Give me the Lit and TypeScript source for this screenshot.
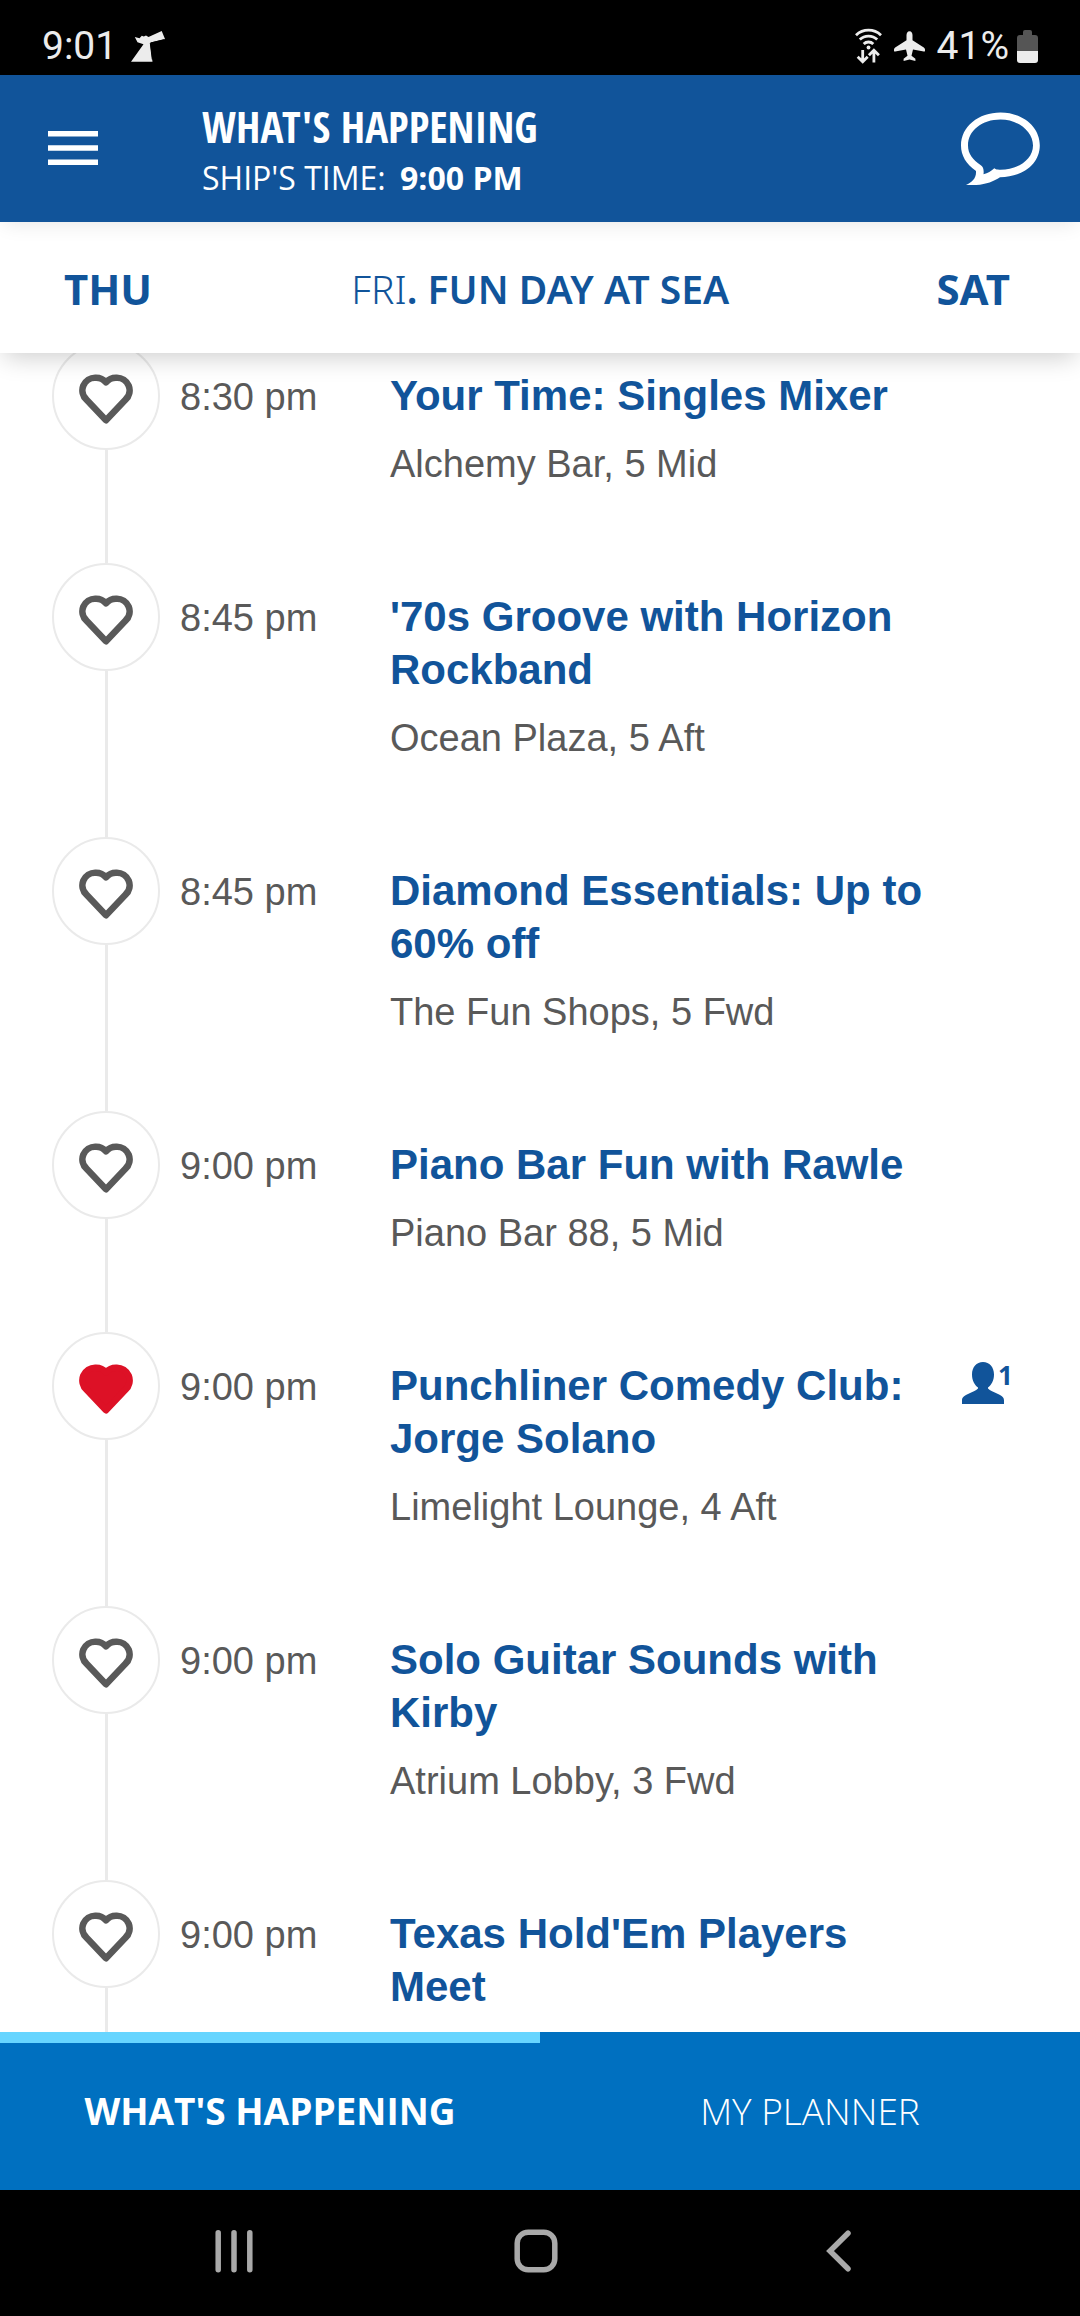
import { LitElement, html, svg, css, nothing } from "lit";
import { customElement, property, query, state } from "lit/decorators.js";
import { classMap } from "lit/directives/class-map.js";

interface CruiseEvent {
  time: string;
  title: string;
  place?: string;
  liked?: boolean;
  friends?: number;
}

const EVENTS: CruiseEvent[] = [
  { time: "8:30 pm", title: "Your Time: Singles Mixer", place: "Alchemy Bar, 5 Mid" },
  { time: "8:45 pm", title: "'70s Groove with Horizon Rockband", place: "Ocean Plaza, 5 Aft" },
  { time: "8:45 pm", title: "Diamond Essentials: Up to 60% off", place: "The Fun Shops, 5 Fwd" },
  { time: "9:00 pm", title: "Piano Bar Fun with Rawle", place: "Piano Bar 88, 5 Mid" },
  {
    time: "9:00 pm",
    title: "Punchliner Comedy Club: Jorge Solano",
    place: "Limelight Lounge, 4 Aft",
    liked: true,
    friends: 1,
  },
  { time: "9:00 pm", title: "Solo Guitar Sounds with Kirby", place: "Atrium Lobby, 3 Fwd" },
  { time: "9:00 pm", title: "Texas Hold'Em Players Meet" },
];

@customElement("status-bar")
class StatusBar extends LitElement {
  static styles = css`
    :host {
      display: flex;
      flex: none;
      align-items: center;
      justify-content: space-between;
      box-sizing: border-box;
      height: 75px;
      padding: 17px 42px 0;
      background: #000;
      color: #ececec;
      font: 400 39px/44px Roboto, "Liberation Sans", sans-serif;
    }
    .group {
      display: flex;
      align-items: center;
    }
    .left {
      gap: 14px;
    }
    .right {
      gap: 12px;
    }
    .battery {
      display: flex;
      align-items: center;
      gap: 8px;
    }
    svg {
      display: block;
      fill: currentColor;
    }
  `;

  render() {
    return html`
      <div class="group left">
        <span>9:01</span>
        <svg width="34" height="31" viewBox="0 0 34 31" aria-hidden="true">
          <path d="M3.800 6 8.500 7.300 10.800 4.800 12.800 5.600 15 4.500 17.500 6 30.700 0 34 8 20 11.500 19.300 14 21.500 30.700H0L12.500 13.300 6.500 11.300Z" />
          <path fill="none" stroke="#000" stroke-width="1" d="M33 8.800 19.300 12 21.300 28.500" />
        </svg>
      </div>
      <div class="group right">
        <svg width="27" height="36" viewBox="0 0 27 36" aria-hidden="true">
          <g fill="none" stroke="currentColor" stroke-width="2.8">
            <path d="M1 7.200a18 18 0 0 1 25 0" />
            <path d="M4.800 11.600a12.400 12.400 0 0 1 17.400 0" />
            <path d="M8.700 16a6.800 6.800 0 0 1 9.600 0" />
            <path d="M7.700 22v12M2.700 28.800l5 5 5-5" />
            <path d="M18.900 34.500v-12M13.900 27.300l5-5 5 5" />
          </g>
          <circle cx="13.500" cy="19.500" r="1.900" />
        </svg>
        <svg width="31" height="31" viewBox="0 0 31 31" aria-hidden="true">
          <path d="M15.500.3c-2 0-3 1.700-3 4v4.900L1.200 16.400Q0 17.200 0 18.400v1.500q.2.800 1.200.6l10.800-2 1.500 6.200-3.900 3v2.200l5.900-1.500 5.900 1.500v-2.200l-3.900-3 1.500-6.200 10.800 2q1 .2 1.200-.6v-1.500q0-1.200-1.200-2L18.500 9.200V4.300c0-2.300-1-4-3-4Z" />
        </svg>
        <div class="battery">
          <span>41%</span>
          <svg width="21" height="33" viewBox="0 0 21 33" aria-hidden="true">
            <path fill="#555" d="M6 2q0-2 2-2h5q2 0 2 2v3h3q3 0 3 3v13H0V8q0-3 3-3h3Z" />
            <path d="M0 21h21v9q0 3-3 3H3q-3 0-3-3Z" />
          </svg>
        </div>
      </div>
    `;
  }
}

@customElement("app-header")
class AppHeader extends LitElement {
  static styles = css`
    :host {
      display: flex;
      flex: none;
      position: relative;
      z-index: 2;
      align-items: center;
      box-sizing: border-box;
      height: 147px;
      padding: 0 40px 0 48px;
      background: #11549a;
      color: #fff;
      box-shadow: 0 4px 20px -4px rgba(0, 0, 0, 0.12);
    }
    button {
      display: block;
      flex: none;
      padding: 0;
      border: 0;
      background: none;
      color: inherit;
    }
    svg {
      display: block;
    }
    .titles {
      flex: 1;
      padding: 8px 104px 0;
    }
    h1 {
      margin: 0;
      font: 700 43px/50px "Open Sans Condensed", "Roboto Condensed", "Liberation Sans Narrow", "Liberation Sans", sans-serif;
    }
    p {
      margin: 0;
      font: 400 32px/52px "Open Sans", sans-serif;
    }
    strong {
      margin-left: 6px;
      font-weight: 700;
    }
  `;

  render() {
    return html`
      <button aria-label="Menu">
        <svg width="50" height="35" viewBox="0 0 50 35">
          <path fill="#fff" d="M0 0h50v5.500H0zM0 14.200h50v5.500H0zM0 28.400h50v5.500H0z" />
        </svg>
      </button>
      <div class="titles">
        <h1>WHAT'S HAPPENING</h1>
        <p>SHIP'S TIME: <strong>9:00 PM</strong></p>
      </div>
      <button aria-label="Chat">
        <svg width="80" height="73" viewBox="0 0 80 73">
          <path
            fill="#fff"
            fill-rule="evenodd"
            d="M40.500.5C62 .5 79.800 14.500 79.800 33.500S62 65 40 65.200C32 70.500 22 74 6 73 12 70.500 16.500 66.500 16 59 6 52 1 43.500 1 33.500 1 14.500 18.500.5 40.500.5ZM40.500 7.500C22 7.500 8 18.500 8 33.500c0 8.500 5 14.500 12.500 19.500 3 2 3.500 5 3 9.300 4.500-1 7.500-3 10.800-6 2 1.600 4 1.400 6.200 1.400C58 57.700 73 47.500 73 33.500S58.500 7.500 40.500 7.500Z"
          />
        </svg>
      </button>
    `;
  }
}

@customElement("day-switcher")
class DaySwitcher extends LitElement {
  static styles = css`
    :host {
      display: flex;
      flex: none;
      position: relative;
      z-index: 1;
      align-items: center;
      justify-content: space-between;
      box-sizing: border-box;
      height: 131px;
      padding: 2px 70px 0 64px;
      background: #fff;
      color: #11549a;
      box-shadow: 0 8px 24px -4px rgba(0, 0, 0, 0.2);
      font: 700 42px/52px "Noto Sans", "Open Sans", sans-serif;
    }
    button {
      padding: 0;
      border: 0;
      background: none;
      color: inherit;
      font: inherit;
    }
    h2 {
      margin: 0 8px 0 0;
      font-weight: 600;
      font-size: 39px;
    }
    .weekday {
      font-weight: 300;
    }
  `;

  render() {
    return html`
      <button>THU</button>
      <h2><span class="weekday">FRI</span>. FUN DAY AT SEA</h2>
      <button>SAT</button>
    `;
  }
}

@customElement("event-row")
class EventRow extends LitElement {
  @property({ attribute: false }) event!: CruiseEvent;
  @state() private liked?: boolean;

  static styles = css`
    :host {
      display: grid;
      grid-template-columns: 108px 210px minmax(0, 1fr) 118px;
      padding: 0 0 0 52px;
      align-items: baseline;
      font-family: "Liberation Sans", Arial, sans-serif;
    }
    .rail {
      display: flex;
      flex-direction: column;
      align-items: center;
      align-self: stretch;
    }
    .like {
      display: flex;
      flex: none;
      align-items: center;
      justify-content: center;
      box-sizing: border-box;
      width: 108px;
      height: 108px;
      padding: 5px 0 0;
      border: 2px solid #eaeaea;
      border-radius: 50%;
      background: #fff;
      color: #595959;
    }
    .like.on {
      color: #dd1126;
    }
    .heart {
      fill: none;
      stroke: currentColor;
      stroke-width: 6.6;
      stroke-linejoin: round;
    }
    .on .heart {
      fill: currentColor;
    }
    .line {
      flex: 1;
      width: 3px;
      background: #eaeaea;
    }
    time {
      padding-left: 20px;
      color: #595959;
      font-size: 38px;
      line-height: 53px;
    }
    .body {
      padding: 27px 20px 74px;
    }
    h3 {
      margin: 0;
      color: #11549a;
      font-size: 42px;
      line-height: 53px;
    }
    p {
      margin: 17px 0 0;
      color: #595959;
      font-size: 38px;
      line-height: 50px;
    }
    .friends {
      display: flex;
      align-self: start;
      padding-top: 30px;
      color: #11549a;
      font: 700 26px/26px "Noto Sans", sans-serif;
    }
    .friends svg {
      flex: none;
      fill: currentColor;
    }
    .friends svg + span {
      margin-left: -6px;
    }
  `;

  render() {
    const { time, title, place, friends } = this.event;
    const on = this.liked ?? !!this.event.liked;
    return html`
      <div class="rail">
        <button
          class=${classMap({ like: true, on })}
          aria-label="Favorite"
          aria-pressed=${on ? "true" : "false"}
          @click=${() => (this.liked = !on)}
        >
          <svg width="54" height="50" viewBox="0 0 54 50">
            <path
              class="heart"
              d="M27 46.200 7.600 25.800A12.700 12.700 0 0 1 16.700 3.700 13.300 13.300 0 0 1 27 8.200 13.300 13.300 0 0 1 37.300 3.700 12.700 12.700 0 0 1 46.400 25.800Z"
            />
          </svg>
        </button>
        <div class="line"></div>
      </div>
      <time>${time}</time>
      <div class="body">
        <h3>${title}</h3>
        ${place ? html`<p>${place}</p>` : nothing}
      </div>
      ${friends
        ? html`<div class="friends">
            <svg width="42" height="42" viewBox="0 0 42 42" aria-hidden="true">
              <path d="M21 0c6.500 0 11 5 11 12.500 0 6-2.500 10.500-6 13v1c2 2.500 5.500 3.300 10 5.500 4.500 2.200 6 3.500 6 6.500V42H0v-3.500c0-3 1.500-4.300 6-6.500 4.500-2.200 8-3 10-5.500v-1c-3.500-2.500-6-7-6-13C10 5 14.500 0 21 0Z" />
            </svg>
            <span>${friends}</span>
          </div>`
        : nothing}
    `;
  }
}

@customElement("bottom-tabs")
class BottomTabs extends LitElement {
  @state() private active = 0;

  static styles = css`
    :host {
      display: grid;
      flex: none;
      grid-template-columns: 1fr 1fr;
      height: 158px;
      background: #0070c0;
    }
    button {
      padding: 0 0 11px;
      border: 0;
      border-top: 11px solid transparent;
      background: none;
      color: #fff;
      font: 300 37px/50px "Open Sans", sans-serif;
    }
    .active {
      border-top-color: #67d5ff;
      font-weight: 700;
    }
  `;

  render() {
    return ["WHAT'S HAPPENING", "MY PLANNER"].map(
      (label, i) => html`<button
        class=${classMap({ active: this.active === i })}
        @click=${() => (this.active = i)}
      >${label}</button>`
    );
  }
}

@customElement("system-nav")
class SystemNav extends LitElement {
  static styles = css`
    :host {
      display: grid;
      flex: none;
      grid-template-columns: repeat(3, 1fr);
      box-sizing: border-box;
      height: 126px;
      padding: 0 90px 4px 83px;
      background: #000;
    }
    button {
      display: flex;
      align-items: center;
      justify-content: center;
      padding: 0;
      border: 0;
      background: none;
    }
    svg {
      fill: none;
      stroke: #a9a9a9;
      stroke-width: 5.5;
      stroke-linecap: round;
    }
  `;

  private key(label: string, shape: unknown) {
    return html`<button aria-label=${label}>
      <svg width="44" height="44" viewBox="0 0 44 44">${shape}</svg>
    </button>`;
  }

  render() {
    return html`
      ${this.key("Recents", svg`<path d="M6.200 3.800v37M22 3.800v37M37.800 3.800v37" />`)}
      ${this.key("Home", svg`<rect x="3.200" y="3.200" width="37.600" height="37.600" rx="11" />`)}
      ${this.key("Back", svg`<path d="M31 4.200 13 22l18 17.800" />`)}
    `;
  }
}

@customElement("app-root")
class AppRoot extends LitElement {
  @query(".list") private list!: HTMLElement;

  static styles = css`
    :host {
      display: flex;
      flex-direction: column;
      height: 100vh;
      background: #fff;
    }
    .list {
      flex: 1;
      min-height: 0;
      overflow-y: auto;
      scrollbar-width: none;
    }
  `;

  async firstUpdated() {
    const rows = Array.from(this.renderRoot.querySelectorAll("event-row")) as EventRow[];
    await Promise.all(rows.map((row) => row.updateComplete));
    this.list.scrollTop = 11;
  }

  render() {
    return html`
      <status-bar></status-bar>
      <app-header></app-header>
      <day-switcher></day-switcher>
      <main class="list">
        ${EVENTS.map((event) => html`<event-row .event=${event}></event-row>`)}
      </main>
      <bottom-tabs></bottom-tabs>
      <system-nav></system-nav>
    `;
  }
}
